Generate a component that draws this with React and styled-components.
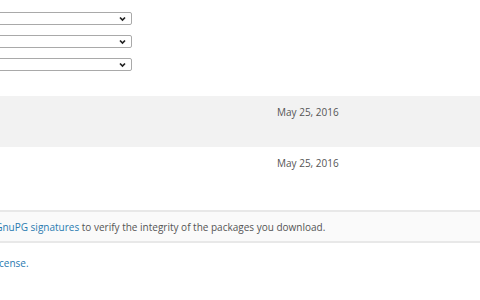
import React from "react";
import styled, { createGlobalStyle } from "styled-components";

const Global = createGlobalStyle`
  html, body { margin: 0; padding: 0; background: #fff; overflow: hidden; }
  body { font-family: "Open Sans", "Liberation Sans", sans-serif; }
`;

const Page = styled.div`
  width: 480px;
  height: 300px;
  overflow: hidden;
  position: relative;
`;

const Inner = styled.div`
  margin-left: -220px;
  width: 700px;
  padding-top: 12px;
`;

const Selects = styled.div`
  display: flex;
  flex-direction: column;
  gap: 10px;
`;

const SelectWrap = styled.div`
  position: relative;
  width: 352px;
  height: 13px;
  box-sizing: border-box;
  border: 1px solid #a9a9a9;
  border-radius: 2px;
  background: #fff;
`;

const Chevron = styled.svg`
  position: absolute;
  right: 5px;
  top: 3px;
`;

const Table = styled.div`
  margin-top: 25px;
`;

const Row = styled.div`
  height: 51px;
  background: ${(p) => (p.$shade ? "#f2f2f2" : "#fff")};
  display: flex;
  padding-top: 9px;
  box-sizing: border-box;
`;

const DateCell = styled.div`
  margin-left: 497px;
  font-size: 10px;
  color: #555;
  line-height: 14px;
`;

const Note = styled.div`
  margin-top: 12px;
  height: 33px;
  box-sizing: border-box;
  background: #fafafa;
  border-top: 2px solid #e8e8e8;
  border-bottom: 2px solid #e8e8e8;
  display: flex;
  align-items: center;
  font-size: 10px;
  color: #555;
  padding-left: 177px;
`;

const Link = styled.a`
  color: #2a7ab0;
  text-decoration: none;
`;

const License = styled.div`
  margin-top: 13px;
  font-size: 10px;
  color: #555;
  padding-left: 81px;
`;

function Select() {
  return (
    <SelectWrap>
      <Chevron width="7" height="6" viewBox="0 0 7 6">
        <path d="M1 1.5 L3.5 4 L6 1.5" stroke="#222" strokeWidth="1.7" fill="none" />
      </Chevron>
    </SelectWrap>
  );
}

export default function App() {
  return (
    <Page>
      <Global />
      <Inner>
        <Selects>
          <Select />
          <Select />
          <Select />
        </Selects>
        <Table>
          <Row $shade>
            <DateCell>May 25, 2016</DateCell>
          </Row>
          <Row>
            <DateCell>May 25, 2016</DateCell>
          </Row>
        </Table>
        <Note>
          <span>
            Use the <Link href="#">GnuPG signatures</Link> to verify the integrity of the packages you download.
          </span>
        </Note>
        <License>
          Released under the <Link href="#">Apache License.</Link>
        </License>
      </Inner>
    </Page>
  );
}
